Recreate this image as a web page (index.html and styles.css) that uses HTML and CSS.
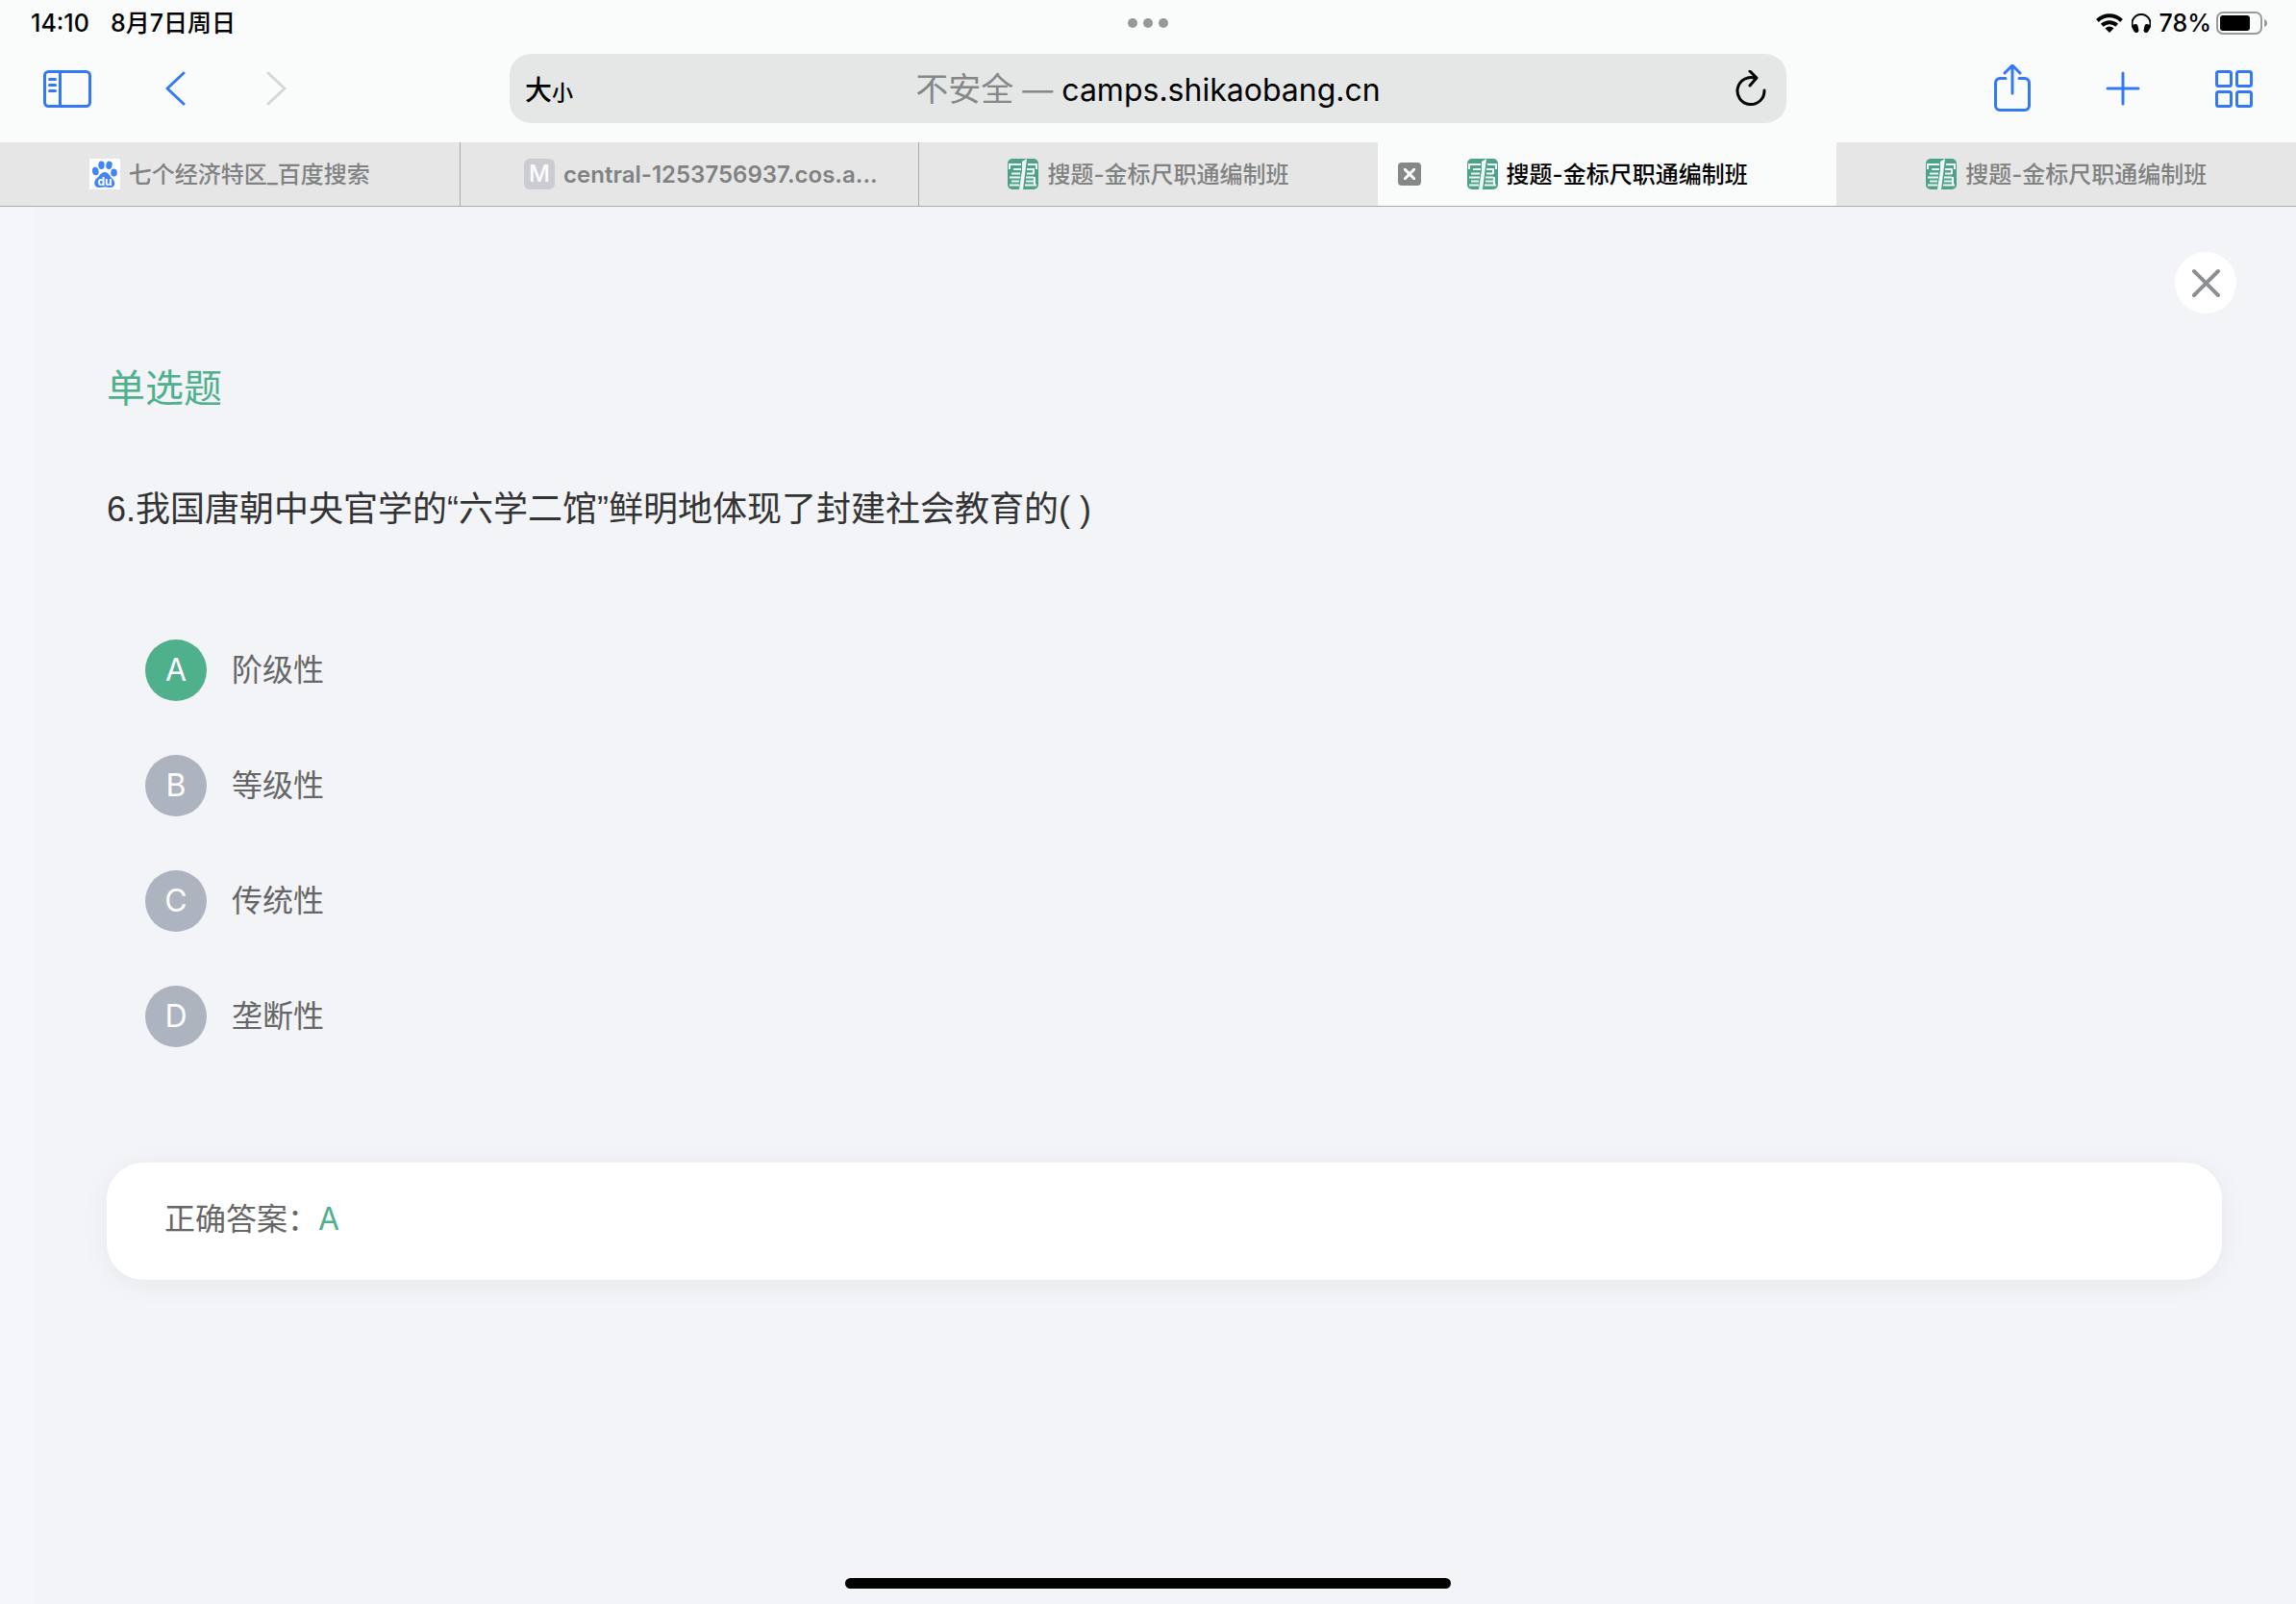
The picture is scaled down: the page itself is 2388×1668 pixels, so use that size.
FILE: index.html
```html
<!DOCTYPE html>
<html lang="zh-CN">
<head>
<meta charset="utf-8">
<meta name="viewport" content="width=device-width, initial-scale=1">
<title>搜题-金标尺职通编制班</title>
<link rel="stylesheet" href="styles.css">
</head>
<body>
<svg class="defs" aria-hidden="true">
  <symbol id="site-logo" viewBox="0 0 32 32">
    <rect width="32" height="32" rx="5" fill="#4da389"/>
    <path d="M2 11V6h12M21 6h9v5M6 11h8M4 15.500h9M2 19.500h11M4 23.500h8M2 27.500h10M20 11h7M20 15.500h7M19 19.500h8M19 23.500h8M18 27.500h12M27 10v6M28 19v9" fill="none" stroke="#f1f7f5" stroke-width="2"/>
    <path d="M15 3l5-3-1.500 12-2.500 20h-4l3-20z" fill="#f1f7f5"/>
  </symbol>
</svg>

<header class="browser">
  <div class="status">
    <div class="status-left"><span>14:10</span><span>8月7日周日</span></div>
    <div class="dots"><i></i><i></i><i></i></div>
    <div class="status-right">
      <svg width="28" height="20" viewBox="0 0 28 20" fill="none" stroke="#000" stroke-width="4">
        <path d="M1.500 7.500a17.700 17.700 0 0 1 25 0"/><path d="M6.300 12.300a11 11 0 0 1 15.400 0"/><path d="M14 20l-4.500-4.600a6.500 6.500 0 0 1 9 0z" fill="#000" stroke="none"/>
      </svg>
      <svg width="20" height="20" viewBox="0 0 20 20">
        <path d="M3.500 18C-3.500 9 3 1 10 1s13.500 8 6.500 17" fill="none" stroke="#000" stroke-width="2"/>
        <rect x="2" y="11" width="5" height="9" rx="2.500" transform="rotate(-12 4.500 15.500)"/><rect x="13" y="11" width="5" height="9" rx="2.500" transform="rotate(12 15.500 15.500)"/>
      </svg>
      <span>78%</span>
      <svg class="battery" width="54" height="24" viewBox="0 0 54 24">
        <rect x="1" y="1" width="46" height="22" rx="6" fill="none" stroke="#999" stroke-width="2"/>
        <rect x="4" y="4" width="31" height="16" rx="3"/><path d="M50 8q3 1 3 4t-3 4z" fill="#999"/>
      </svg>
    </div>
  </div>

  <div class="toolbar">
    <div class="tools tools-left">
      <button class="tool" aria-label="边栏"><svg width="50" height="40" viewBox="0 -1 50 40"><rect x="1.500" y="1.500" width="47" height="36" rx="4"/><path d="M17.500 2v35M6.500 9.500h6M6.500 15.500h6M6.500 21.500h6"/></svg></button>
      <button class="tool" aria-label="后退"><svg width="22" height="38" viewBox="0 0 22 38"><path d="M20 3L3 19l17 16"/></svg></button>
      <button class="tool tool-off" aria-label="前进" disabled><svg width="22" height="38" viewBox="0 0 22 38"><path d="M2 3l17 16L2 35"/></svg></button>
    </div>
    <div class="address">
      <button class="text-size" aria-label="文字大小">大<small>小</small></button>
      <button class="url"><span class="insecure">不安全</span><span class="dash"> — </span>camps.shikaobang.cn</button>
      <button class="reload" aria-label="重新载入"><svg width="32" height="38" viewBox="0 1 32 38"><path d="M21 9.500A14 14 0 1 0 30 22M15 2l7 7-7 8"/></svg></button>
    </div>
    <div class="tools tools-right">
      <button class="tool" aria-label="共享"><svg width="38" height="50" viewBox="0 1 38 50"><path d="M12 15.500H6a4.500 4.500 0 0 0-4.500 4.500v24A4.500 4.500 0 0 0 6 48.500h26a4.500 4.500 0 0 0 4.500-4.500V20a4.500 4.500 0 0 0-4.500-4.500h-6M19 31V3M11 10l8-8 8 8"/></svg></button>
      <button class="tool" aria-label="新标签页"><svg width="36" height="36" viewBox="0 0 36 36"><path d="M18 2v32M2 18h32"/></svg></button>
      <button class="tool" aria-label="标签页概览"><svg width="40" height="40" viewBox="0 -1 40 40"><rect x="1.500" y="1.500" width="15" height="15" rx="2"/><rect x="22.500" y="1.500" width="15" height="15" rx="2"/><rect x="1.500" y="22.500" width="15" height="15" rx="2"/><rect x="22.500" y="22.500" width="15" height="15" rx="2"/></svg></button>
    </div>
  </div>

  <nav class="tabs">
    <div class="tab"><a class="tab-link" href="#">
      <svg width="32" height="32" viewBox="0 0 32 32"><rect width="32" height="32" fill="#fff"/><g fill="#4285f4"><ellipse cx="6.300" cy="13" rx="3.300" ry="4.300" transform="rotate(-10 6.300 13)"/><ellipse cx="12.500" cy="6.800" rx="3.200" ry="4.200"/><ellipse cx="20.500" cy="6.800" rx="3.200" ry="4.200" transform="rotate(10 20.500 6.800)"/><ellipse cx="25.500" cy="14.500" rx="3.300" ry="4"/><path d="M16 14c4 0 5 4 8 7 3 2.500 3.500 9-2 9-3 0-4-.500-6-.500s-3 .500-6 .500c-5.500 0-6-6.500-2.500-9.500C11 18 11.500 14 16 14z"/></g><text class="du" x="16" y="28" text-anchor="middle">du</text></svg>
      <span>七个经济特区_百度搜索</span></a></div>
    <div class="tab"><a class="tab-link tab-long" href="#"><b class="letter">M</b><span>central-1253756937.cos.a...</span></a></div>
    <div class="tab"><a class="tab-link" href="#"><svg width="32" height="32"><use href="#site-logo"/></svg><span>搜题-金标尺职通编制班</span></a></div>
    <div class="tab tab-active">
      <button class="tab-close" aria-label="关闭标签页"><svg width="12" height="12" viewBox="0 0 12 12"><path d="M1 1l10 10M11 1L1 11"/></svg></button>
      <a class="tab-link" href="#" aria-current="page"><svg width="32" height="32"><use href="#site-logo"/></svg><span>搜题-金标尺职通编制班</span></a></div>
    <div class="tab"><a class="tab-link" href="#"><svg width="32" height="32"><use href="#site-logo"/></svg><span>搜题-金标尺职通编制班</span></a></div>
  </nav>
</header>

<main class="page">
  <div class="page-top"><button class="close" aria-label="关闭"><svg width="30" height="30" viewBox="-2 -2 30 30"><path d="M1 1l25 25M26 1L1 26"/></svg></button></div>
  <section class="quiz">
    <h1 class="kind">单选题</h1>
    <p class="question" id="question">6.我国唐朝中央官学的“六学二馆”鲜明地体现了封建社会教育的( )</p>
    <div class="options" role="radiogroup" aria-labelledby="question">
      <label class="option"><input type="radio" name="answer" checked><span class="mark">A</span><span>阶级性</span></label>
      <label class="option"><input type="radio" name="answer"><span class="mark">B</span><span>等级性</span></label>
      <label class="option"><input type="radio" name="answer"><span class="mark">C</span><span>传统性</span></label>
      <label class="option"><input type="radio" name="answer"><span class="mark">D</span><span>垄断性</span></label>
    </div>
    <div class="result">正确答案：<span class="right">A</span></div>
  </section>
</main>
<div class="home-bar"></div>
</body>
</html>
```

FILE: styles.css
```css
* {
  box-sizing: border-box;
}

body {
  margin: 0;
  min-height: 100vh;
  display: flex;
  flex-direction: column;
  font-family: Inter, "Noto Sans CJK SC", sans-serif;
  background: #f2f4f8;
  color: #000;
}

button {
  border: 0;
  padding: 0;
  background: none;
  color: inherit;
  font: inherit;
}

svg {
  display: block;
  flex: none;
}

.defs {
  position: absolute;
  width: 0;
  height: 0;
}

.browser {
  background: #fafcfb;
}

/* Status line */
.status {
  display: grid;
  grid-template-columns: 1fr auto 1fr;
  align-items: center;
  height: 48px;
  padding: 0 30px;
  font-size: 25px;
  font-weight: 500;
  line-height: 32px;
}

.status-left {
  display: flex;
  gap: 22px;
  padding-left: 2px;
}

.dots {
  display: flex;
  gap: 6px;
}

.dots i {
  width: 10px;
  height: 10px;
  border-radius: 50%;
  background: #969797;
}

.status-right {
  display: flex;
  align-items: center;
  justify-content: flex-end;
  gap: 9px;
  margin-right: -1px;
}

.battery {
  margin-left: -4px;
}

/* Toolbar */
.toolbar {
  display: grid;
  grid-template-columns: minmax(0, 530fr) minmax(0, 1328fr) minmax(0, 530fr);
  align-items: center;
  height: 100px;
  padding-bottom: 12px;
}

.tools {
  display: flex;
  align-items: center;
}

.tools-left {
  gap: 76px;
  padding-left: 45px;
}

.tools-right {
  justify-content: flex-end;
  gap: 78px;
  padding-right: 44px;
}

.tool svg,
.reload svg,
.close svg,
.tab-close svg {
  fill: none;
  stroke: currentColor;
  stroke-width: 3;
  stroke-linecap: round;
  stroke-linejoin: round;
}

.tool {
  color: #3478f6;
}

.tool-off {
  color: #d6d8d7;
  margin-left: 8px;
}

.address {
  display: grid;
  grid-template-columns: 1fr auto 1fr;
  align-items: center;
  height: 72px;
  padding: 0 16px;
  border-radius: 22px;
  background: #e5e7e6;
}

.text-size {
  justify-self: start;
  font-size: 28px;
  font-weight: 500;
}

.text-size small {
  font-size: 22px;
}

.url {
  padding-top: 2px;
  font-size: 32px;
  line-height: 48px;
}

.insecure {
  color: #858789;
  font-size: 34px;
}

.dash {
  color: #858789;
  font-size: 32px;
}

.reload {
  justify-self: end;
  margin-right: 5px;
}

/* Tabs */
.tabs {
  display: grid;
  grid-template-columns: repeat(5, minmax(0, 1fr));
  height: 67px;
  border-bottom: 1px solid #a9abab;
}

.tab {
  display: grid;
  grid-template-columns: 1fr auto 1fr;
  align-items: center;
  border-left: 1px solid #a9abab;
  background: #e6e6e6;
  color: #808282;
}

.tab:first-child,
.tab-active,
.tab-active + .tab {
  border-left: 0;
}

.tab-active {
  background: #fafcfb;
  color: #000;
}

.tab-link {
  grid-column: 2;
  display: flex;
  align-items: center;
  gap: 9px;
  color: inherit;
  font-size: 24px;
  font-weight: 500;
  line-height: 32px;
  text-decoration: none;
  white-space: nowrap;
}

.tab-link span {
  padding-top: 2px;
}

.tab-long {
  padding-left: 24px;
  font-weight: 600;
}

.letter {
  width: 32px;
  height: 32px;
  border-radius: 6px;
  background: #cbccd2;
  color: #fff;
  font-weight: 500;
  text-align: center;
}

.du {
  fill: #fff;
  font-size: 12px;
  font-weight: 700;
}

.tab-close {
  grid-column: 1;
  display: grid;
  place-items: center;
  width: 24px;
  height: 24px;
  margin-left: 21px;
  border-radius: 4px;
  background: #868887;
  color: #fff;
}

/* Web page */
.page {
  flex: 1;
  padding: 47px 62px 64px 77px;
  border-left: 34px solid #f4f6fb;
}

.page-top {
  display: flex;
  justify-content: flex-end;
}

.close {
  display: grid;
  place-items: center;
  width: 64px;
  height: 64px;
  border-radius: 50%;
  background: #fff;
  color: #8b9095;
}

.close svg {
  stroke-width: 4;
}

.quiz {
  padding: 48px 15px 0 0;
}

.kind {
  margin: 0;
  color: #4fb08c;
  font-size: 40px;
  font-weight: 400;
  line-height: 60px;
}

.question {
  margin: 68px 0 0;
  color: #333;
  font-family: "Liberation Sans", "Noto Sans CJK SC", sans-serif;
  font-size: 36px;
  line-height: 56px;
}

.options {
  display: flex;
  flex-direction: column;
  gap: 56px;
  margin: 107px 0 120px;
  padding-left: 40px;
}

.option {
  display: flex;
  align-items: center;
  gap: 26px;
  color: #666;
  font-size: 32px;
  line-height: 48px;
}

.option input {
  position: absolute;
  opacity: 0;
}

.mark {
  width: 64px;
  height: 64px;
  border-radius: 50%;
  background: #adb4bf;
  color: #fff;
  line-height: 64px;
  text-align: center;
}

.option input:checked + .mark {
  background: #4fb08c;
}

.result {
  padding: 35px 60px 39px;
  border-radius: 38px;
  background: #fff;
  box-shadow: 0 4px 30px rgba(0, 0, 0, 0.05);
  color: #666;
  font-size: 32px;
  line-height: 48px;
}

.right {
  color: #4fb08c;
}

.home-bar {
  position: fixed;
  bottom: 16px;
  left: 50%;
  width: 630px;
  height: 11px;
  margin-left: -315px;
  border-radius: 6px;
  background: #000;
}
```
